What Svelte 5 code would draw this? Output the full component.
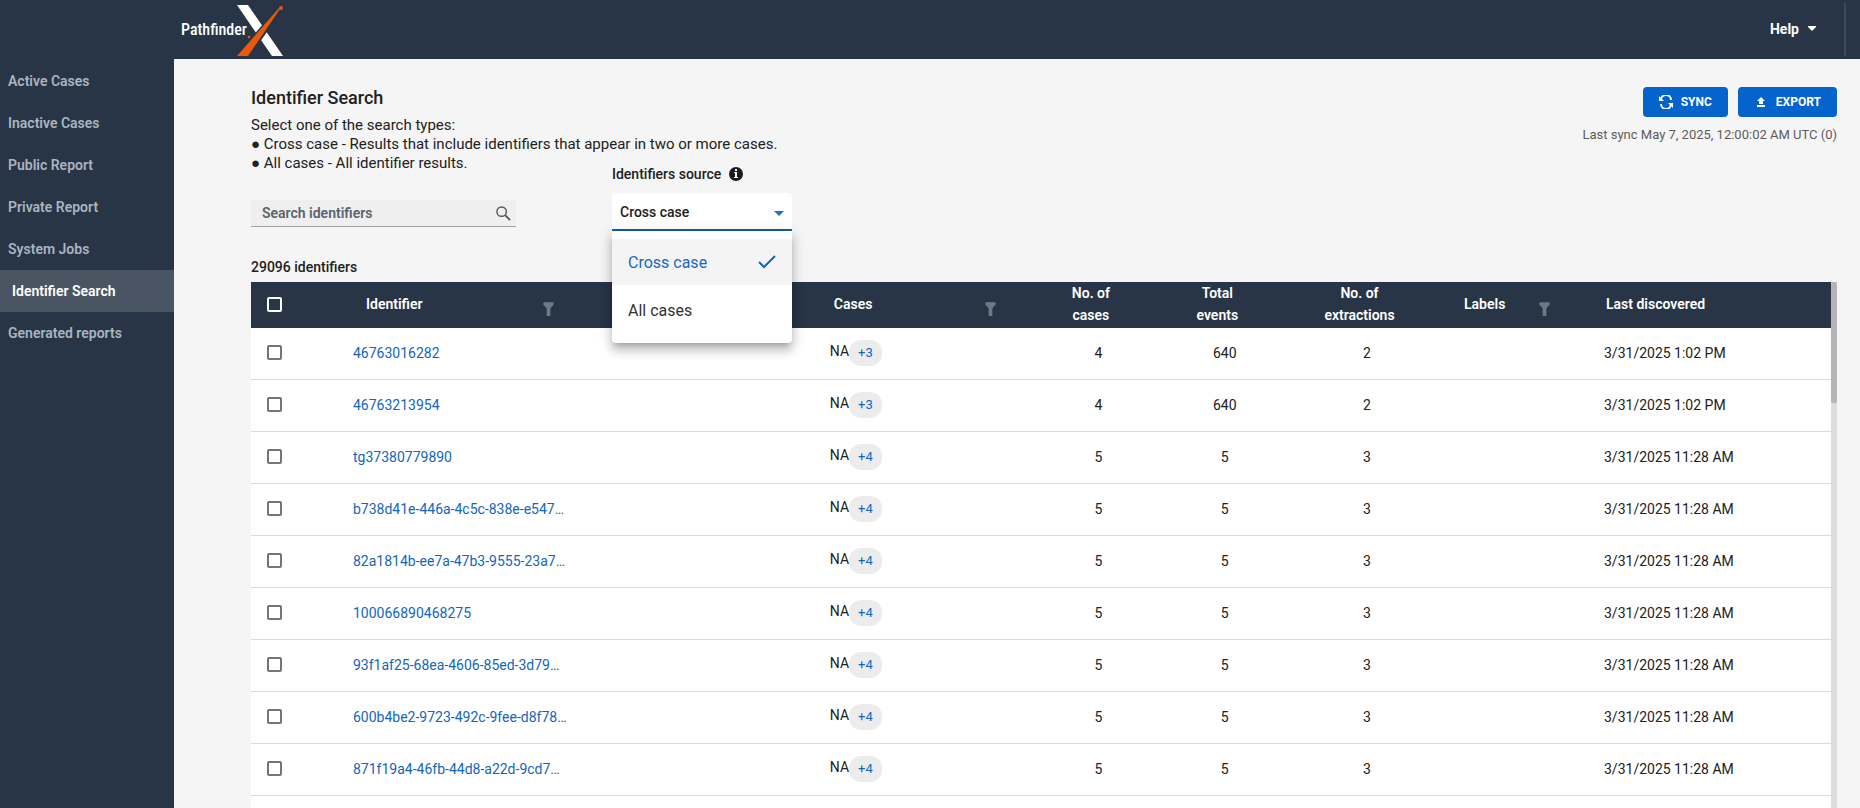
<script lang="ts">
	interface Row {
		identifier: string;
		more: number;
		cases: number;
		events: number;
		extractions: number;
		discovered: string;
	}

	const navItems = [
		'Active Cases',
		'Inactive Cases',
		'Public Report',
		'Private Report',
		'System Jobs',
		'Identifier Search',
		'Generated reports'
	];
	const sources = ['Cross case', 'All cases'];

	const early = '3/31/2025 11:28 AM';
	const late = '3/31/2025 1:02 PM';

	const rows: Row[] = [
		{ identifier: '46763016282', more: 3, cases: 4, events: 640, extractions: 2, discovered: late },
		{ identifier: '46763213954', more: 3, cases: 4, events: 640, extractions: 2, discovered: late },
		...[
			'tg37380779890',
			'b738d41e-446a-4c5c-838e-e547…',
			'82a1814b-ee7a-47b3-9555-23a7…',
			'100066890468275',
			'93f1af25-68ea-4606-85ed-3d79…',
			'600b4be2-9723-492c-9fee-d8f78…',
			'871f19a4-46fb-44d8-a22d-9cd7…'
		].map((identifier) => ({
			identifier,
			more: 4,
			cases: 5,
			events: 5,
			extractions: 3,
			discovered: early
		}))
	];

	let activeNav = $state('Identifier Search');
	let source = $state('Cross case');
	let open = $state(true);
	let query = $state('');
	let selected: string[] = $state([]);

	let allSelected = $derived(selected.length === rows.length);

	function toggleAll() {
		selected = allSelected ? [] : rows.map((r) => r.identifier);
	}

	function toggleMenu(e: MouseEvent) {
		e.preventDefault();
		open = !open;
	}

	function pick(value: string) {
		source = value;
		open = false;
	}
</script>

{#snippet filterIcon()}
	<svg class="filter" viewBox="0 0 12 15" aria-hidden="true">
		<path d="M1 0h10l1 2-4 5v8H4V7L0 2z" fill="#6f7986" />
	</svg>
{/snippet}

<div class="app">
	<header>
		<a class="brand" href="#home">
			<span>Pathfinder</span>
			<svg viewBox="0 0 50 52" aria-hidden="true">
				<path d="M0 1h11l35 51H35z" fill="#fff" />
				<path d="M41 4l3 2L12 52H0z" fill="#283547" stroke="#283547" stroke-width="2" />
				<path d="M42 4l1 1L11 52H0z" fill="#e8590c" />
				<circle cx="44" cy="4" r="2" fill="#d9531e" />
				<circle cx="12" cy="33" r="1.3" fill="#e8590c" />
			</svg>
		</a>
		<button class="help">
			Help
			<svg viewBox="0 0 8 5" aria-hidden="true"><path d="M0 0h8v1L4 5 0 1z" fill="#fff" /></svg>
		</button>
	</header>

	<nav>
		{#each navItems as item}
			<a href="#nav" class:active={item === activeNav} onclick={() => (activeNav = item)}>{item}</a>
		{/each}
	</nav>

	<main>
		<div class="top">
			<div>
				<h1>Identifier Search</h1>
				<p>
					Select one of the search types:<br />
					● Cross case - Results that include identifiers that appear in two or more cases.<br />
					● All cases - All identifier results.
				</p>
			</div>
			<div class="actions">
				<div class="buttons">
					<button>
						<svg width="14" height="14" viewBox="0 0 14 14" fill="none" stroke="#fff" stroke-width="2" aria-hidden="true">
							<path d="M2 5a5 5 0 0 1 10 0M12 9a5 5 0 0 1-10 0" />
							<path d="M0 1v5h5zM14 13V8H9z" fill="#fff" stroke="none" />
						</svg>
						SYNC
					</button>
					<button>
						<svg width="14" height="10" viewBox="0 0 14 10" fill="#fff" aria-hidden="true">
							<path d="M7 0l4 4H9v3H5V4H3zM3 8h8v2H3z" />
						</svg>
						EXPORT
					</button>
				</div>
				<span>Last sync May 7, 2025, 12:00:02 AM UTC (0)</span>
			</div>
		</div>

		<div class="controls">
			<div class="search">
				<input type="text" placeholder="Search identifiers" aria-label="Search identifiers" bind:value={query} />
				<svg width="15" height="15" viewBox="0 0 16 16" fill="none" stroke="#555" stroke-width="1.5" aria-hidden="true">
					<circle cx="6" cy="6" r="5" />
					<path d="M10 10l5 5" stroke-width="2" />
				</svg>
			</div>
			<div class="source">
				<label for="source">
					Identifiers source
					<svg width="14" height="14" viewBox="0 0 14 14" aria-hidden="true">
						<circle cx="7" cy="7" r="7" fill="#1b1b1b" />
						<path d="M6 2h2v2H6zM5 5h3v5h1v1H5v-1h1V6H5z" fill="#f5f5f5" />
					</svg>
				</label>
				<div class="select">
					<select id="source" bind:value={source} onmousedown={toggleMenu}>
						{#each sources as option}
							<option>{option}</option>
						{/each}
					</select>
					<svg width="10" height="5" viewBox="0 0 10 5" aria-hidden="true"><path d="M0 0h10L5 5z" fill="#1c75c4" /></svg>
					{#if open}
						<div class="menu">
							{#each sources as option}
								<button class:chosen={option === source} onclick={() => pick(option)}>
									{option}
									{#if option === source}
										<svg width="18" height="14" viewBox="0 0 18 14" fill="none" stroke="#0b66c3" stroke-width="2" aria-hidden="true">
											<path d="M1 7l5 5L17 1" />
										</svg>
									{/if}
								</button>
							{/each}
						</div>
					{/if}
				</div>
			</div>
		</div>

		<div class="count">29096 identifiers</div>

		<div class="results">
			<div class="scroll">
				<table>
					<colgroup>
						<col class="c-check" />
						<col class="c-id" />
						<col />
						<col class="c-cases" />
						<col class="c-num" />
						<col class="c-num" />
						<col class="c-mid" />
						<col class="c-mid" />
						<col class="c-date" />
					</colgroup>
					<thead>
						<tr>
							<th class="check">
								<input type="checkbox" aria-label="Select all" checked={allSelected} onchange={toggleAll} />
							</th>
							<th><div class="head id">Identifier {@render filterIcon()}</div></th>
							<th></th>
							<th><div class="head cases">Cases {@render filterIcon()}</div></th>
							<th class="num">No. of<br />cases</th>
							<th class="num">Total<br />events</th>
							<th class="num">No. of<br />extractions</th>
							<th><div class="head labels">Labels {@render filterIcon()}</div></th>
							<th class="date">Last discovered</th>
						</tr>
					</thead>
					<tbody>
						{#each rows as row}
							<tr>
								<td class="check">
									<input type="checkbox" aria-label="Select {row.identifier}" value={row.identifier} bind:group={selected} />
								</td>
								<td><a href="#identifier">{row.identifier}</a></td>
								<td></td>
								<td>
									<div class="case"><span>NA</span><button>+{row.more}</button></div>
								</td>
								<td class="num">{row.cases}</td>
								<td class="num">{row.events}</td>
								<td class="num">{row.extractions}</td>
								<td></td>
								<td>{row.discovered}</td>
							</tr>
						{/each}
					</tbody>
				</table>
			</div>
			<div class="track"><div class="thumb"></div></div>
		</div>
	</main>
</div>

<style>
	:global(body) {
		margin: 0;
		font-family: Roboto, 'Liberation Sans', sans-serif;
		font-size: 14px;
		color: #212121;
	}

	.app {
		display: grid;
		grid-template: 59px minmax(0, 1fr) / 174px minmax(0, 1fr);
		height: 100vh;
		background: #283547;
	}

	button,
	input,
	select {
		font: inherit;
	}

	button {
		border: none;
		cursor: pointer;
	}

	a {
		text-decoration: none;
	}

	header {
		grid-column: 1 / -1;
		display: flex;
		align-items: center;
		justify-content: space-between;
		padding: 3px 14px 3px 181px;
	}

	.brand {
		display: flex;
		align-items: center;
		color: #fff;
		font-family: 'Roboto Condensed', 'Liberation Sans Narrow', Roboto, sans-serif;
		font-size: 16px;
		font-weight: 500;
	}

	.brand svg {
		width: 50px;
		height: 52px;
		margin-left: -10px;
	}

	.help {
		display: flex;
		align-items: center;
		gap: 9px;
		height: 53px;
		padding: 0 28px 2px 0;
		background: none;
		border-right: 2px solid #3d495a;
		color: #fff;
		font-weight: 700;
	}

	.help svg {
		width: 8px;
		height: 5px;
	}

	nav {
		padding-top: 1px;
	}

	nav a {
		display: block;
		padding-left: 8px;
		line-height: 42px;
		color: #aab4c0;
		font-weight: 600;
	}

	nav .active {
		padding-left: 12px;
		background: #4a5563;
		color: #fff;
	}

	main {
		display: flex;
		flex-direction: column;
		padding: 28px 23px 0 77px;
		background: #f5f5f5;
	}

	.top {
		display: flex;
		justify-content: space-between;
	}

	h1 {
		margin: 0 0 7px;
		font-size: 18px;
		line-height: 22px;
		font-weight: 500;
	}

	p {
		margin: 0;
		font-size: 15px;
		line-height: 19px;
	}

	.actions {
		display: flex;
		flex-direction: column;
		align-items: flex-end;
		gap: 10px;
		font-size: 13px;
		line-height: 16px;
		color: #5c5c5c;
	}

	.buttons {
		display: flex;
		gap: 10px;
	}

	.buttons button {
		display: flex;
		align-items: center;
		gap: 8px;
		height: 30px;
		padding: 0 16px;
		border-radius: 4px;
		background: #0563cc;
		color: #fff;
		font-size: 12px;
		font-weight: 700;
	}

	.controls {
		display: flex;
		align-items: flex-end;
		gap: 96px;
		margin-top: -7px;
	}

	.search {
		display: flex;
		align-items: center;
		width: 265px;
		height: 27px;
		margin-bottom: 4px;
		padding: 0 5px 0 11px;
		box-sizing: border-box;
		border-bottom: 1px solid #a3a3a3;
		background: #efefef;
	}

	.search input {
		flex: 1;
		min-width: 0;
		padding: 0;
		border: none;
		outline: none;
		background: none;
		font-weight: 600;
	}

	.search input::placeholder {
		color: #59636b;
	}

	.source label {
		display: flex;
		align-items: center;
		gap: 8px;
		margin-bottom: 11px;
		line-height: 16px;
		font-weight: 500;
	}

	.select {
		position: relative;
		width: 180px;
	}

	.select > svg {
		position: absolute;
		right: 8px;
		top: 18px;
		pointer-events: none;
	}

	select {
		display: block;
		width: 100%;
		height: 38px;
		padding: 2px 8px 0;
		appearance: none;
		border: none;
		border-bottom: 2px solid #115f9f;
		border-radius: 4px 4px 0 0;
		outline: none;
		background: #fff;
		color: #212121;
		font-weight: 500;
	}

	.menu {
		position: absolute;
		top: 100%;
		left: 0;
		right: 0;
		z-index: 2;
		display: grid;
		gap: 2px;
		padding: 8px 0 10px;
		border-radius: 0 0 4px 4px;
		background: #fff;
		box-shadow:
			0 5px 5px -3px rgba(0, 0, 0, 0.2),
			0 8px 10px 1px rgba(0, 0, 0, 0.14),
			0 3px 14px 2px rgba(0, 0, 0, 0.12);
	}

	.menu button {
		display: flex;
		align-items: center;
		justify-content: space-between;
		height: 46px;
		padding: 0 16px;
		background: #fff;
		color: #333;
		font-size: 16px;
	}

	.menu .chosen {
		background: #f4f4f4;
		color: #1668c7;
	}

	.count {
		margin: 27px 0 6px;
		line-height: 18px;
		font-weight: 500;
	}

	.results {
		flex: 1;
		min-height: 0;
		display: flex;
		background: #fff;
	}

	.scroll {
		flex: 1;
		overflow-y: auto;
		scrollbar-width: none;
	}

	.track {
		width: 6px;
		background: #dedede;
	}

	.thumb {
		height: 23%;
		border-radius: 2px;
		background: #b5b5b7;
	}

	table {
		width: 100%;
		table-layout: fixed;
		border-collapse: collapse;
	}

	.c-check {
		width: 102px;
	}

	.c-id {
		width: 16%;
	}

	.c-cases {
		width: 13%;
	}

	.c-num {
		width: 8%;
	}

	.c-mid {
		width: 10%;
	}

	.c-date {
		width: 227px;
	}

	th,
	td {
		padding: 0 0 2px;
		text-align: left;
	}

	th {
		position: sticky;
		top: 0;
		height: 44px;
		background: #283547;
		color: #fff;
		line-height: 22px;
		font-weight: 600;
	}

	td {
		height: 49px;
		border-bottom: 1px solid #dcdcdc;
	}

	td a {
		color: #1266bd;
	}

	.check {
		padding-left: 16px;
	}

	input[type='checkbox'] {
		display: block;
		width: 15px;
		height: 15px;
		margin: 0;
		box-sizing: border-box;
		appearance: none;
		border: 2px solid #757575;
		border-radius: 2px;
	}

	input[type='checkbox']:checked {
		background: #0563cc;
	}

	th input[type='checkbox'] {
		border-color: #fff;
	}

	.num {
		text-align: center;
	}

	th.num {
		padding-right: 15px;
	}

	th.date {
		padding-left: 2px;
	}

	.head {
		display: flex;
		align-items: center;
		justify-content: space-between;
	}

	.head.id {
		padding: 0 52px 0 13px;
	}

	.head.cases {
		padding: 0 39px 0 4px;
	}

	.head.labels {
		padding: 0 54px 0 18px;
	}

	.filter {
		width: 11px;
		height: 14px;
		margin-top: 10px;
	}

	.case {
		display: flex;
		align-items: center;
	}

	.case span {
		margin-bottom: 4px;
	}

	.case button {
		height: 26px;
		padding: 0 9px;
		border-radius: 12px;
		background: #ececec;
		color: #1266bd;
		font-size: 13px;
	}
</style>
